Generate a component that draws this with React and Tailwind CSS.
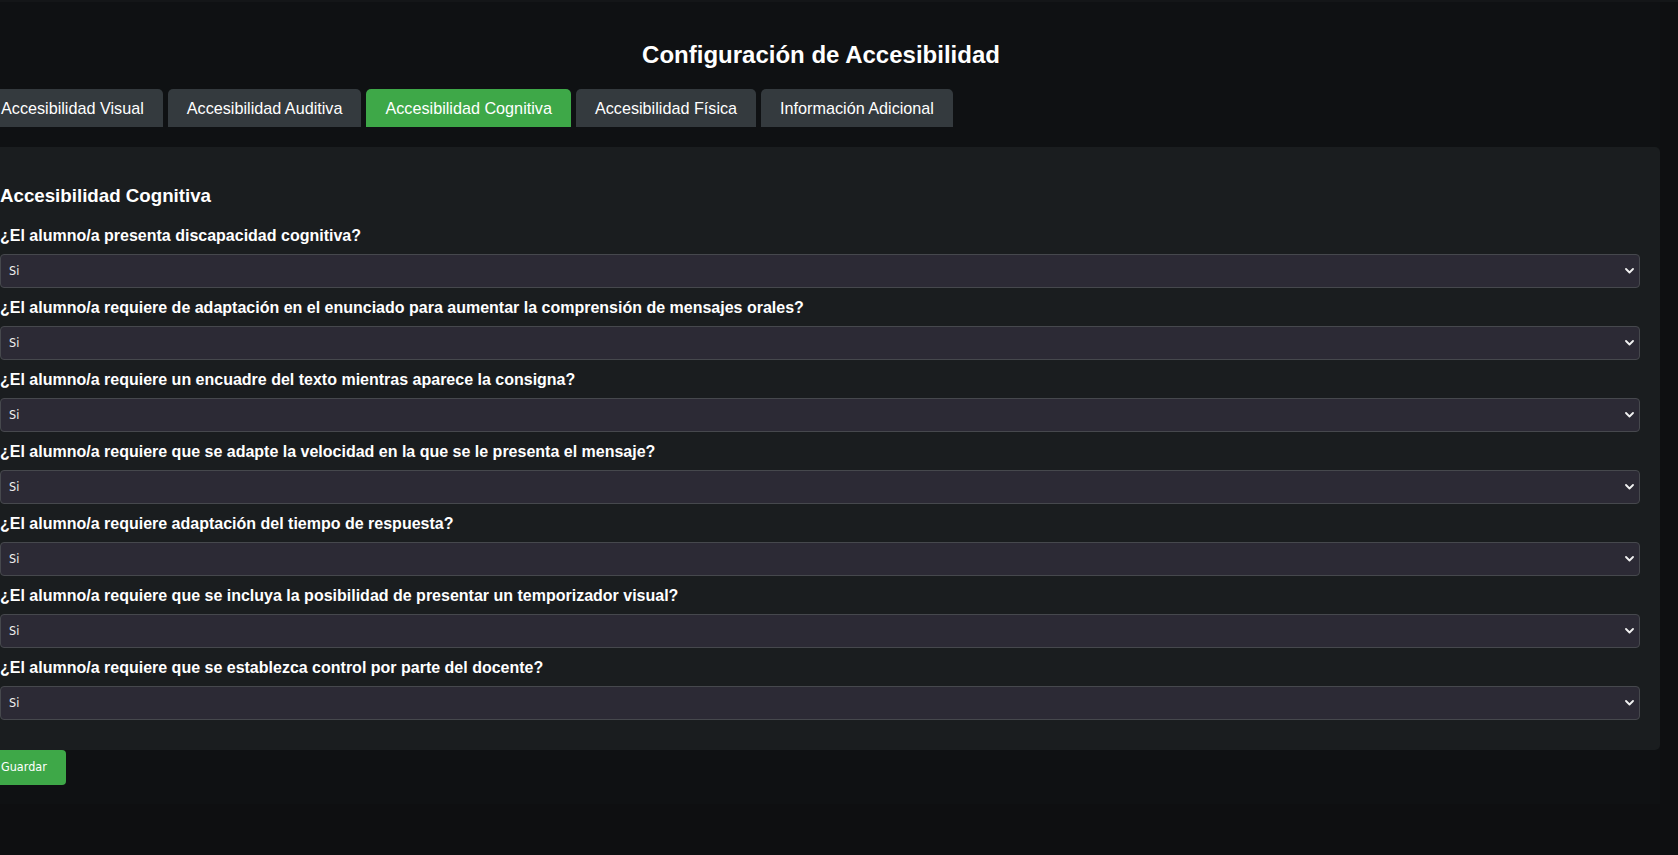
import React, { useState } from 'react';

const TABS = [
  'Accesibilidad Visual',
  'Accesibilidad Auditiva',
  'Accesibilidad Cognitiva',
  'Accesibilidad Física',
  'Información Adicional',
];

const QUESTIONS = [
  '¿El alumno/a presenta discapacidad cognitiva?',
  '¿El alumno/a requiere de adaptación en el enunciado para aumentar la comprensión de mensajes orales?',
  '¿El alumno/a requiere un encuadre del texto mientras aparece la consigna?',
  '¿El alumno/a requiere que se adapte la velocidad en la que se le presenta el mensaje?',
  '¿El alumno/a requiere adaptación del tiempo de respuesta?',
  '¿El alumno/a requiere que se incluya la posibilidad de presentar un temporizador visual?',
  '¿El alumno/a requiere que se establezca control por parte del docente?',
];

function Chevron() {
  return (
    <svg width="9" height="6" viewBox="0 0 9 6" className="pointer-events-none absolute right-[6px] top-1/2 -translate-y-1/2">
      <path d="M1 1l3.5 3.5L8 1" fill="none" stroke="#f2f2f2" strokeWidth="1.8" strokeLinecap="round" strokeLinejoin="round" />
    </svg>
  );
}

function Question({ label }) {
  const [value, setValue] = useState('si');
  return (
    <div className="flex flex-col">
      <label className="text-[16px] leading-[18px] font-bold text-white mb-[9px]">{label}</label>
      <div className="relative">
        <select
          value={value}
          onChange={(e) => setValue(e.target.value)}
          className="w-full h-[34px] appearance-none rounded-[4px] border border-[#46484d] bg-[#2c2a35] pl-[8px] text-[12.5px] text-[#f0f0f0] font-['DejaVu_Sans_Condensed','DejaVu_Sans',sans-serif] outline-none"
        >
          <option value="si">Si</option>
          <option value="no">No</option>
        </select>
        <Chevron />
      </div>
    </div>
  );
}

export default function App() {
  const [active, setActive] = useState(2);

  return (
    <div className="min-h-[855px] bg-[#0e0f11] font-['Liberation_Sans',Arial,sans-serif] overflow-hidden">
      <div className="h-[2px] bg-[#141618]" />
      <div className="w-[1678px] ml-[-18px] bg-[#0f1113] pb-[19px]">
        <div className="flex justify-center pt-[39px]">
          <h1 className="text-[24px] leading-[28px] font-bold text-white">Configuración de Accesibilidad</h1>
        </div>
        <div className="flex gap-[5px] mt-[20px]">
          {TABS.map((t, i) => (
            <button
              key={t}
              onClick={() => setActive(i)}
              className={
                'h-[38px] px-[19px] rounded-t-[5px] text-[16.2px] text-white ' +
                (i === active ? 'bg-[#3ea848]' : 'bg-[#343a3e]')
              }
            >
              {t}
            </button>
          ))}
        </div>
        <div className="mt-[20px] bg-[#1a1d1f] rounded-[5px] pl-[18px] pr-[20px] pt-[38px] pb-[30px]">
          <h3 className="text-[18.72px] leading-[22px] font-bold text-white mb-[20px]">Accesibilidad Cognitiva</h3>
          <div className="flex flex-col gap-[11px]">
            {QUESTIONS.map((q) => (
              <Question key={q} label={q} />
            ))}
          </div>
        </div>
        <button className="h-[35px] px-[19px] rounded-[4px] bg-[#3ea848] text-white text-[12.5px] font-['DejaVu_Sans_Condensed','DejaVu_Sans',sans-serif]">
          Guardar
        </button>
      </div>
    </div>
  );
}
